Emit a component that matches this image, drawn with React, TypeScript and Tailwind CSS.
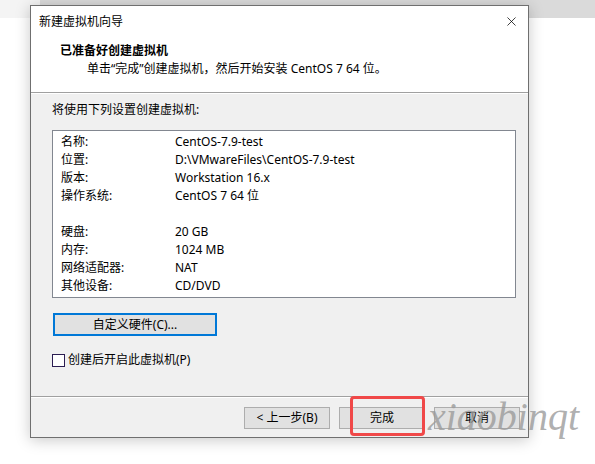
import { X } from "lucide-react";

const rows1 = [
  ["名称:", "CentOS-7.9-test"],
  ["位置:", "D:\\VMwareFiles\\CentOS-7.9-test"],
  ["版本:", "Workstation 16.x"],
  ["操作系统:", "CentOS 7 64 位"],
];

const rows2 = [
  ["硬盘:", "20 GB"],
  ["内存:", "1024 MB"],
  ["网络适配器:", "NAT"],
  ["其他设备:", "CD/DVD"],
];

const font = { fontFamily: '"Noto Sans", "Noto Sans CJK SC", sans-serif' };

function Row({ label, value }: { label: string; value: string }) {
  return (
    <div className="flex h-[18px] items-center">
      <span className="w-[114px]">{label}</span>
      <span>{value}</span>
    </div>
  );
}

function WinButton({ label, className }: { label: string; className?: string }) {
  return (
    <button className={`h-[22px] w-[86px] border border-[#adadad] bg-[#e1e1e1] text-[12px] text-black ${className ?? ""}`}>
      {label}
    </button>
  );
}

export default function App() {
  return (
    <div style={font} className="relative h-[464px] w-[595px] overflow-hidden bg-white text-[12px] text-black">
      {/* desktop behind the window */}
      <div className="absolute left-0 top-0 h-[18px] w-full bg-[#dadada]" />
      <div className="absolute left-0 top-0 h-[18px] w-[40px] bg-[#f4f4f4]" />

      <div className="relative ml-[30px] mt-[5px] flex h-[433px] w-[499px] flex-col border border-[#6f6f6f] bg-[#f0f0f0] shadow-[0_2px_14px_rgba(0,0,0,0.22)]">
        {/* title bar */}
        <div className="flex h-[30px] items-center justify-between bg-white pl-[8px] pr-[9px]">
          <span className="pt-[1px]">新建虚拟机向导</span>
          <X size={15} strokeWidth={1.2} className="text-black" />
        </div>

        {/* header */}
        <div className="flex h-[56px] flex-col bg-white pl-[29px] pt-[6px]">
          <div className="h-[18px] font-bold leading-[18px]">已准备好创建虚拟机</div>
          <div className="h-[18px] pl-[27px] leading-[18px]">单击“完成”创建虚拟机，然后开始安装 CentOS 7 64 位。</div>
        </div>
        <div className="h-px bg-[#a0a0a0]" />
        <div className="h-px bg-white" />

        {/* body */}
        <div className="flex flex-1 flex-col pl-[21px] pr-[12px]">
          <div className="mt-[7px] h-[18px] leading-[18px]">将使用下列设置创建虚拟机:</div>
          <div className="mt-[11px] flex h-[168px] flex-col border border-[#828790] bg-white pl-[8px] pt-[2px]">
            {rows1.map(([l, v]) => (
              <Row key={l} label={l} value={v} />
            ))}
            <div className="h-[18px]" />
            {rows2.map(([l, v]) => (
              <Row key={l} label={l} value={v} />
            ))}
          </div>

          <button className="ml-[1px] mt-[15px] h-[23px] w-[164px] border-2 border-[#0078d7] bg-[#e1e1e1] text-[12px]">
            自定义硬件(C)...
          </button>

          <label className="mt-[17px] flex h-[14px] items-center gap-[3px]">
            <span className="h-[13px] w-[13px] border border-[#2b1d52] bg-white" />
            <span>创建后开启此虚拟机(P)</span>
          </label>
        </div>

        {/* footer */}
        <div className="h-px bg-[#a0a0a0]" />
        <div className="h-px bg-white" />
        <div className="flex h-[39px] items-start gap-[9px] pl-[213px] pt-[9px]">
          <WinButton label="< 上一步(B)" />
          <WinButton label="完成" />
          <WinButton label="取消" />
        </div>
      </div>

      {/* red highlight */}
      <div className="absolute left-[350px] top-[396px] h-[40px] w-[75px] rounded-[4px] border-[3px] border-[#f04848]" />

      {/* watermark */}
      <div
        className="absolute left-[428px] top-[393px] text-[40px] italic leading-[48px] text-[#9a9a9a]/80"
        style={{ fontFamily: '"Liberation Serif", serif' }}
      >
        xiaobinqt
      </div>
    </div>
  );
}
